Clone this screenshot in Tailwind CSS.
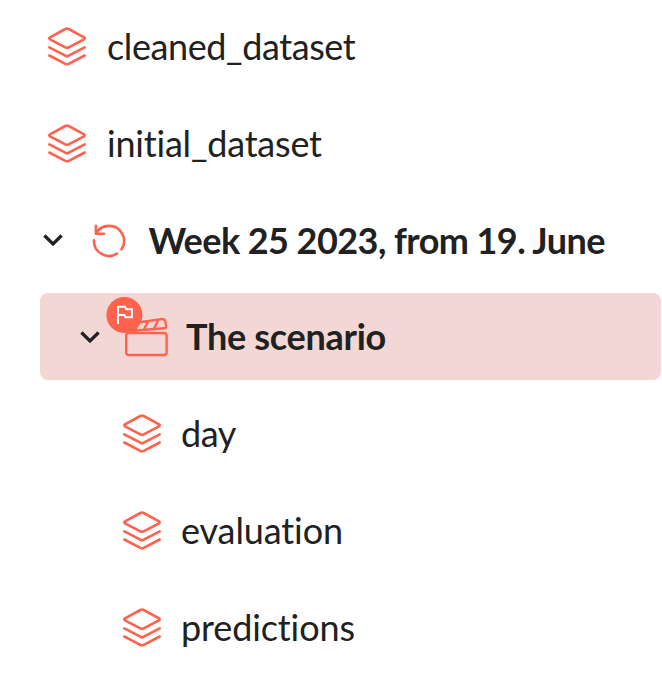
<!DOCTYPE html>
<html lang="en">
<head>
<meta charset="utf-8">
<title>Datasets</title>
<script src="https://cdn.jsdelivr.net/npm/@tailwindcss/browser@4"></script>
</head>
<body class="bg-white text-[#212121] overflow-hidden">
<svg class="hidden">
  <symbol id="layers" viewBox="0 0 40 40" fill="none" stroke="#ff624d" stroke-width="2.6" stroke-linecap="round" stroke-linejoin="round">
    <path d="M18.3 3Q20 2.1 21.7 3L37 11.3Q38.5 12.3 37 13.3L21.7 21.3Q20 22.2 18.3 21.3L3 13.3Q1.5 12.3 3 11.3Z"/>
    <path d="M2.3 21.4L18.3 29.7Q20 30.5 21.7 29.7L37.7 21.4"/>
    <path d="M2.3 29.5L18.3 37.9Q20 38.7 21.7 37.9L37.7 29.5"/>
  </symbol>
  <symbol id="chevron" viewBox="0 0 20 12" fill="none" stroke="#212121" stroke-width="3.2">
    <path d="M1.4 1.5L10 10L18.6 1.5"/>
  </symbol>
</svg>
<ul class="w-[661px] pt-0.5 flex flex-col gap-[10px] font-['Lato',sans-serif] text-[36px] leading-[87px] tracking-[-0.4px] whitespace-nowrap">
  <li class="h-[87px] flex items-center pl-[47px] gap-5"><svg class="size-10 shrink-0"><use href="#layers"/></svg><span class="pt-[2px]">cleaned_dataset</span></li>
  <li class="h-[87px] flex items-center pl-[47px] gap-5"><svg class="size-10 shrink-0"><use href="#layers"/></svg><span class="pt-[2px] tracking-[-0.2px]">initial_dataset</span></li>
  <li class="h-[87px] flex items-center pl-[43px] font-bold">
    <svg class="w-5 h-3 shrink-0"><use href="#chevron"/></svg>
    <svg class="ml-[28px] mr-[21.5px] w-9 h-9 shrink-0" viewBox="91 221.5 36 36" fill="none" stroke="#ff624d" stroke-width="2.6" stroke-linecap="round" stroke-linejoin="round">
      <path d="M95.9 225.3V233.3H104M95.9 233.1A15 15 0 0 1 109 225.4A15 15 0 0 1 121.5 248.8"/>
      <path d="M94 239.7A15 15 0 0 0 117 253.1"/>
    </svg>
    <span class="pt-[2px] tracking-[-0.56px]">Week 25 2023, from 19. June</span>
  </li>
  <li class="ml-[39.5px] h-[87px] flex items-center pl-[40.5px] font-bold bg-[#f2d7d4] rounded-lg">
    <svg class="w-5 h-3 shrink-0"><use href="#chevron"/></svg>
    <svg class="ml-[5px] mr-[16px] w-[65px] h-[63px] shrink-0" viewBox="105 305 65 63" overflow="visible" fill="none" stroke="#ff624d" stroke-width="2.4" stroke-linejoin="round">
      <rect x="126.2" y="333" width="40.4" height="22" rx="2.6"/>
      <path d="M127 331.3L164.2 328.3Q166.3 328.1 166.1 326L165.5 322Q164.8 318.7 161 319.1L137 322.8M148.3 321.2L143.7 329.8M158.4 319.7L153.8 329M139 322.8L134.5 330.6"/>
      <circle cx="124.4" cy="315" r="18" fill="#ff624d" stroke="none"/>
      <path d="M118 324V306.8H125.2L126 309.3H131.9V317.3H125.4L124.5 314.9H118" stroke="white" stroke-width="2" stroke-linejoin="miter"/>
    </svg>
    <span class="tracking-[-0.3px]">The scenario</span>
  </li>
  <li class="h-[87px] flex items-center pl-[122px] gap-[19px]"><svg class="size-10 shrink-0 mb-[2px]"><use href="#layers"/></svg><span>day</span></li>
  <li class="h-[87px] flex items-center pl-[122px] gap-[19px]"><svg class="size-10 shrink-0 mb-[2px]"><use href="#layers"/></svg><span class="tracking-[-0.1px]">evaluation</span></li>
  <li class="h-[87px] flex items-center pl-[122px] gap-[19px]"><svg class="size-10 shrink-0 mb-[2px]"><use href="#layers"/></svg><span class="tracking-[-0.12px]">predictions</span></li>
</ul>
</body>
</html>
